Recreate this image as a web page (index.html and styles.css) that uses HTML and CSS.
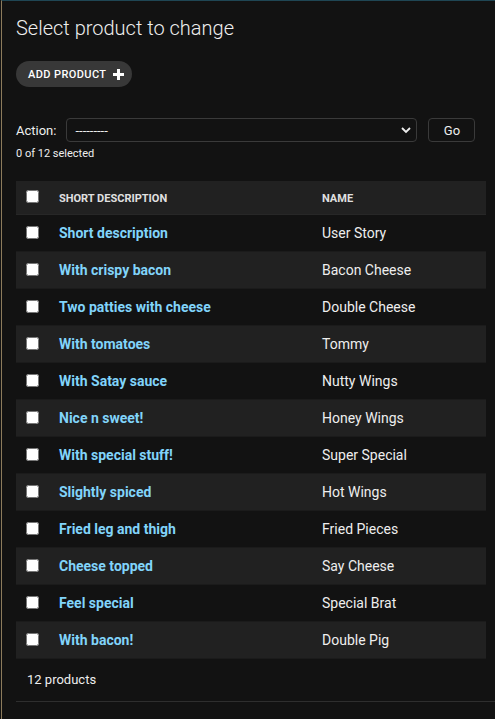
FILE: index.html
```html
<!DOCTYPE html>
<html>
<head>
<meta charset="utf-8">
<link rel="stylesheet" href="styles.css">
</head>
<body>
<div class="frame">
  <div class="content">
    <h1 class="title">Select product to change</h1>
    <div class="tools">
      <a class="addlink" href="#">ADD PRODUCT
        <svg class="plus" width="11" height="11" viewBox="0 0 11 11"><path d="M4 0h3v4h4v3H7v4H4V7H0V4h4z" fill="#fff"/></svg>
      </a>
    </div>
    <div class="actions">
      <label class="action-label">Action:</label>
      <div class="select-wrap">
        <select class="select"><option>---------</option></select>
        <svg class="chev" width="10" height="7" viewBox="0 0 10 7"><path d="M1 1l4 4 4-4" fill="none" stroke="#eee" stroke-width="1.8"/></svg>
      </div>
      <button class="go">Go</button>
    </div>
    <div class="counter">0 of 12 selected</div>
    <table class="results">
      <thead>
        <tr><th class="c-check"><input type="checkbox"></th><th class="c-desc">SHORT DESCRIPTION</th><th class="c-name">NAME</th></tr>
      </thead>
      <tbody>
        <tr><td class="c-check"><input type="checkbox"></td><th class="c-desc"><a href="#">Short description</a></th><td class="c-name">User Story</td></tr>
        <tr class="alt"><td class="c-check"><input type="checkbox"></td><th class="c-desc"><a href="#">With crispy bacon</a></th><td class="c-name">Bacon Cheese</td></tr>
        <tr><td class="c-check"><input type="checkbox"></td><th class="c-desc"><a href="#">Two patties with cheese</a></th><td class="c-name">Double Cheese</td></tr>
        <tr class="alt"><td class="c-check"><input type="checkbox"></td><th class="c-desc"><a href="#">With tomatoes</a></th><td class="c-name">Tommy</td></tr>
        <tr><td class="c-check"><input type="checkbox"></td><th class="c-desc"><a href="#">With Satay sauce</a></th><td class="c-name">Nutty Wings</td></tr>
        <tr class="alt"><td class="c-check"><input type="checkbox"></td><th class="c-desc"><a href="#">Nice n sweet!</a></th><td class="c-name">Honey Wings</td></tr>
        <tr><td class="c-check"><input type="checkbox"></td><th class="c-desc"><a href="#">With special stuff!</a></th><td class="c-name">Super Special</td></tr>
        <tr class="alt"><td class="c-check"><input type="checkbox"></td><th class="c-desc"><a href="#">Slightly spiced</a></th><td class="c-name">Hot Wings</td></tr>
        <tr><td class="c-check"><input type="checkbox"></td><th class="c-desc"><a href="#">Fried leg and thigh</a></th><td class="c-name">Fried Pieces</td></tr>
        <tr class="alt"><td class="c-check"><input type="checkbox"></td><th class="c-desc"><a href="#">Cheese topped</a></th><td class="c-name">Say Cheese</td></tr>
        <tr><td class="c-check"><input type="checkbox"></td><th class="c-desc"><a href="#">Feel special</a></th><td class="c-name">Special Brat</td></tr>
        <tr class="alt"><td class="c-check"><input type="checkbox"></td><th class="c-desc"><a href="#">With bacon!</a></th><td class="c-name">Double Pig</td></tr>
      </tbody>
    </table>
    <div class="paginator">12 products</div>
  </div>
</div>
</body>
</html>
```
FILE: styles.css
```css
html, body {
  margin: 0;
  padding: 0;
  background: #121212;
  height: 100%;
}
body {
  font-family: Roboto, "Liberation Sans", sans-serif;
  color: #eeeeee;
  overflow: hidden;
}
.frame {
  margin-left: 1px;
  border-left: 1px solid #8c7b5c;
  border-top: 1px solid #1f4654;
  height: 718px;
}
.content {
  padding-left: 14px;
  display: flex;
  flex-direction: column;
  align-items: flex-start;
}
.title {
  margin: 15px 0 0 0;
  font-size: 20px;
  line-height: 24px;
  font-weight: 300;
  color: #eeeeee;
}
.tools {
  margin-top: 21px;
}
.addlink {
  display: flex;
  align-items: center;
  gap: 7px;
  height: 26px;
  padding: 0 8px 0 12px;
  border-radius: 13px;
  background: #383838;
  color: #fff;
  text-decoration: none;
  font-size: 11px;
  font-weight: 500;
  letter-spacing: 0.4px;
}
.plus { display: block; }
.actions {
  margin-top: 31px;
  display: flex;
  align-items: center;
  height: 24px;
}
.action-label {
  font-size: 13px;
  color: #eeeeee;
  margin-right: 10px;
}
.select-wrap {
  position: relative;
}
.select {
  appearance: none;
  -webkit-appearance: none;
  width: 351px;
  height: 24px;
  box-sizing: border-box;
  background: #121212;
  border: 1px solid #3a3a3a;
  border-radius: 4px;
  color: #eeeeee;
  font-family: Roboto, "Liberation Sans", sans-serif;
  font-size: 13px;
  padding: 0 8px;
  display: block;
}
.chev {
  position: absolute;
  right: 6px;
  top: 9px;
}
.go {
  margin-left: 11px;
  width: 47px;
  height: 24px;
  box-sizing: border-box;
  background: #121212;
  border: 1px solid #3a3a3a;
  border-radius: 4px;
  color: #eeeeee;
  font-family: Roboto, "Liberation Sans", sans-serif;
  font-size: 13px;
  padding: 0;
}
.counter {
  margin-top: 5px;
  font-size: 11px;
  line-height: 14px;
  color: #eeeeee;
}
.results {
  margin-top: 20px;
  width: 470px;
  border-collapse: collapse;
  table-layout: fixed;
}
.results thead th {
  background: #212121;
  height: 31px;
  font-size: 11px;
  font-weight: 700;
  color: #e0e0e0;
  text-align: left;
  padding: 2px 8px 0 8px;
  border-bottom: 1px solid #272727;
}
.results td, .results tbody th {
  height: 36px;
  padding: 0 8px;
  font-size: 14px;
  text-align: left;
  border-bottom: 1px solid #1b1b1b;
}
.results tbody th { font-weight: 700; }
.results tr.alt td, .results tr.alt th { background: #212121; }
.results a {
  color: #81d4fa;
  text-decoration: none;
}
.c-check { width: 19px; padding-left: 10px !important; }
.results .c-check { padding-right: 6px; }
.c-desc { width: 247px; }
.results input[type=checkbox] {
  margin: -2px 0 0 0;
  width: 13px;
  height: 13px;
  display: block;
}
.results thead input[type=checkbox] {
  margin-top: -4px;
}
.paginator {
  align-self: stretch;
  margin-top: 0;
  padding: 13px 11px 13px 11px;
  font-size: 13px;
  line-height: 16px;
  border-bottom: 1px solid #2e2e2e;
}
```
